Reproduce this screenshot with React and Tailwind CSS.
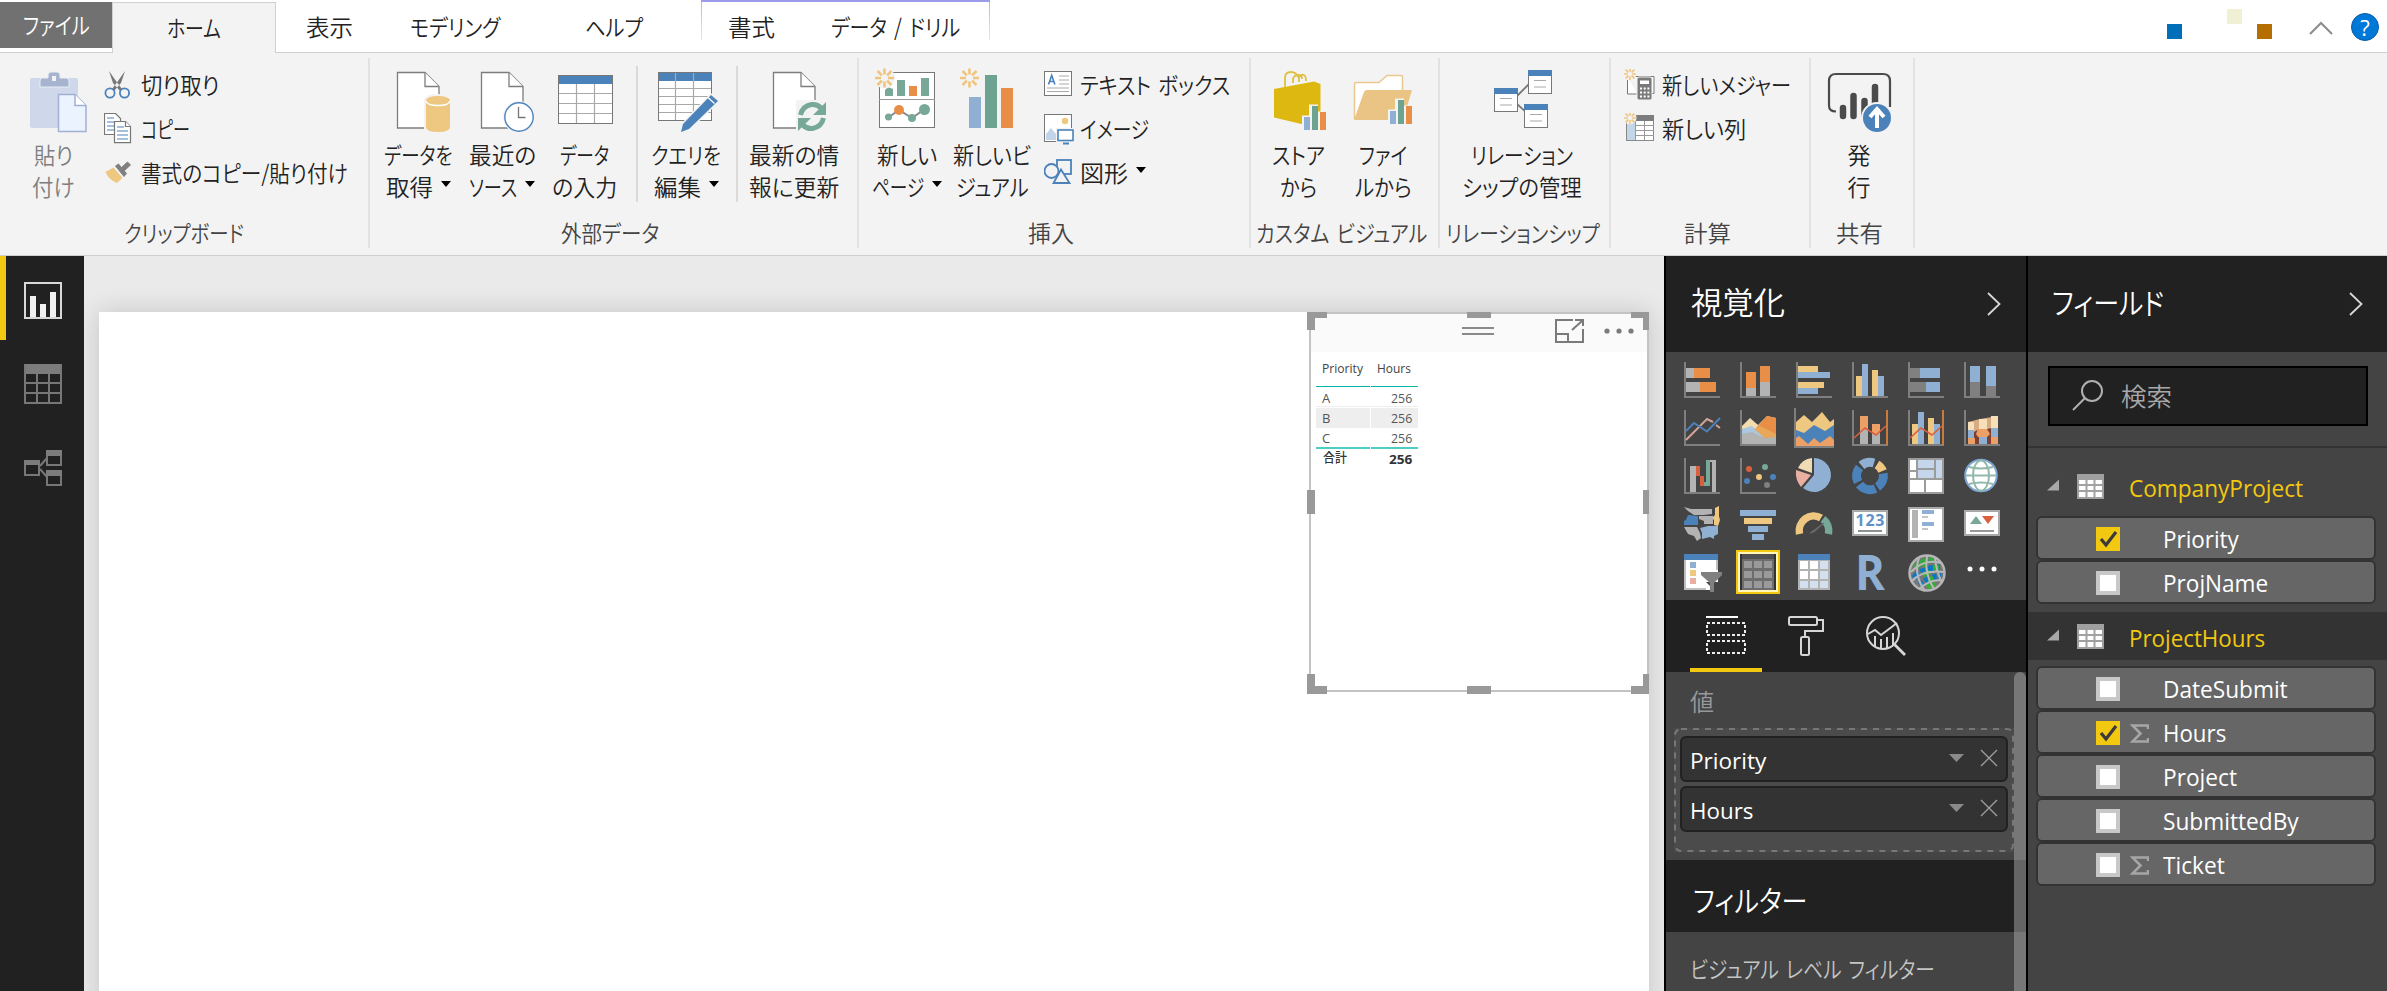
import React, { useLayoutEffect, useRef, useState } from "react";

/* A single line of text, condensed or widened to the width of its box. */
function Fit({ className, latin, children }) {
  const ref = useRef(null);
  const [scale, setScale] = useState(1);
  useLayoutEffect(() => {
    const el = ref.current;
    setScale(el.parentElement.clientWidth / el.offsetWidth);
  }, [children]);
  return (
    <span className={"block shrink-0 " + (latin ? "" : "-mt-[3px] ") + className}>
      <span ref={ref} className="inline-block origin-left whitespace-nowrap" style={{ transform: `scaleX(${scale})` }}>
        {children}
      </span>
    </span>
  );
}

const Caret = () => (
  <svg width="10" height="6" viewBox="0 0 10 6" className="ml-2 -mt-[6px] shrink-0">
    <path d="M0 0H10L5 6Z" fill="#000" />
  </svg>
);

const Star = ({ x, y, s = 1 }) => (
  <g transform={`translate(${x} ${y}) scale(${s})`} stroke="#efc57d" strokeWidth="2.6">
    <circle r="10.5" fill="#f3f3f3" stroke="none" />
    <path d="M0-9.5V-3.5M0 3.5V9.5M-9.5 0H-3.5M3.5 0H9.5M-7-7L-2.6-2.6M2.6 2.6L7 7M-7 7L-2.6 2.6M2.6-2.6L7-7" />
  </g>
);

const Doc = ({ x }) => (
  <g fill="#fff" stroke="#7d7d7d" strokeWidth="1.3">
    <path d={`M${x} 72.5h27.500l14 14v41.500h-41.500z`} />
    <path d={`M${x + 27.5} 72.500v14h14`} />
  </g>
);

/* ---------- ribbon icons ---------- */
const PasteIcon = (
  <g>
    <path d="M32 78h44q2 0 2 2v48H32q-2 0-2-2V80q0-2 2-2z" fill="#cfd8ea" />
    <path d="M42 78h6v-3q0-3 3-3h6q3 0 3 3v3h6q3 0 3 3v6H40v-6q0-3 2-3z" fill="#a6b4d0" stroke="#e8ecf5" />
    <rect x="52" y="76" width="4" height="5" fill="#f3f3f3" />
    <path d="M58.500 94.500h16.500l11 11v26H58.500z" fill="#ebf3ff" stroke="#9fb1d3" strokeWidth="1.500" />
    <path d="M75 94.500v11h11" fill="#fff" stroke="#9fb1d3" strokeWidth="1.500" />
  </g>
);
const GetDataIcon = (
  <g>
    <Doc x={397.5} />
    <path d="M424 101q0-7 14-7t14 7v33h-28z" fill="#f3f3f3" />
    <path d="M426 101v26q0 5 12 5t12-5v-26z" fill="#eec780" />
    <ellipse cx="438" cy="100.500" rx="12" ry="4.500" fill="#eec780" />
    <path d="M426 101q1 4.500 12 4.500t12-4.500" fill="none" stroke="#fff" strokeWidth="1.300" />
  </g>
);
const RecentIcon = (
  <g>
    <Doc x={481.5} />
    <circle cx="519" cy="117" r="16" fill="#f3f3f3" />
    <circle cx="519" cy="117" r="14.200" fill="#fff" stroke="#4e83bd" strokeWidth="1.400" />
    <path d="M518.500 107v10.500h7" fill="none" stroke="#777" strokeWidth="1.300" />
  </g>
);
const TableIcon = (
  <g>
    <rect x="558.500" y="75.500" width="54" height="48" fill="#fff" />
    <rect x="559" y="76" width="53" height="8" fill="#4c82ba" />
    <path d="M558 93.500h54M558 103.500h54M558 113.500h54M576.500 84v39M594.500 84v39" stroke="#a9a9a9" strokeWidth="1.200" />
    <rect x="558.500" y="75.500" width="54" height="48" fill="none" stroke="#777" />
  </g>
);
const QueryIcon = (
  <g>
    <rect x="658.500" y="72.500" width="53" height="48" fill="#fff" />
    <rect x="659" y="73" width="52" height="8" fill="#4c82ba" />
    <path d="M659 88.500h52M659 96.500h52M659 104.500h52M659 112.500h52M675.500 73v48M693.500 73v48" stroke="#a9a9a9" strokeWidth="1.200" />
    <rect x="658.500" y="72.500" width="53" height="48" fill="none" stroke="#777" />
    <path d="M681 132l2-8 28-29 7 6-29 28z" fill="#4c82ba" stroke="#f3f3f3" strokeWidth="3" paintOrder="stroke" />
    <path d="M708 97.500l6.500 6" stroke="#fff" strokeWidth="1.200" />
  </g>
);
const RefreshIcon = (
  <g>
    <Doc x={773.5} />
    <rect x="796" y="100" width="32" height="32" fill="#f3f3f3" />
    <g fill="none" stroke="#78a897" strokeWidth="5">
      <path d="M800.500 115q2-9 11-10.500 6-.500 9.500 3.500" />
      <path d="M823.500 118q-2 9-11 10.500-6 .500-9.500-3.500" />
    </g>
    <path d="M826 102v13h-13zM798 131v-13h13z" fill="#78a897" />
  </g>
);
const NewPageIcon = (
  <g>
    <rect x="879.500" y="72.500" width="55" height="55" fill="#fff" stroke="#777" />
    <path d="M879 99.500h56" stroke="#999" />
    <path d="M885 90l3-3 5 2v7h-8zM897 80h8v16h-8zM921 78h8v18h-8z" fill="#78a897" />
    <rect x="909" y="86" width="8" height="10" fill="#e88e46" />
    <path d="M889 117l10-7 13 8 12-8.500" fill="none" stroke="#8a8a8a" strokeWidth="2" />
    <circle cx="888.500" cy="117" r="3.500" fill="#78a897" />
    <circle cx="899" cy="110" r="5" fill="#e88e46" />
    <circle cx="912" cy="118" r="4" fill="#78a897" />
    <circle cx="924.500" cy="109.500" r="5.500" fill="#78a897" />
    <Star x={884.5} y={78} />
  </g>
);
const NewVisualIcon = (
  <g>
    <rect x="969" y="97" width="12" height="31" fill="#8fafd3" />
    <rect x="985" y="75" width="12" height="53" fill="#6ea392" />
    <rect x="1001" y="88" width="12" height="40" fill="#e88e46" />
    <Star x={969.5} y={78} />
  </g>
);
const StoreIcon = (
  <g>
    <path d="M1285 88v-10q0-6 6-6 5 0 8 6M1293 83v-4q1-4 5-4 4 0 4 4M1299 82v-5q2-3 5-2 2 1 2 6" fill="none" stroke="#dfc041" strokeWidth="1.800" />
    <path d="M1274 89l40-7.500 6.500 2.500v37l-12 4.500-5 -1-29.500-7z" fill="#ddb811" />
    <path d="M1302 115.500h7v-11h9v7h9v20h-25z" fill="#f3f3f3" />
    <rect x="1304" y="117" width="6" height="13" fill="#8fafd3" />
    <rect x="1312" y="106" width="6" height="24" fill="#6ea392" />
    <rect x="1320" y="112" width="6" height="18" fill="#e88e46" />
  </g>
);
const FileIcon = (
  <g>
    <path d="M1354.500 119v-35q0-1.500 1.500-1.500h23l8-7h14q1.500 0 1.500 1.500v14" fill="#fff" stroke="#ebc88f" strokeWidth="1.500" />
    <path d="M1354 120l10-28q1-2 3-2h45l-9 30z" fill="#eac485" />
    <path d="M1388 109.500h7v-11h9v7h9v20h-25z" fill="#f3f3f3" />
    <rect x="1390" y="111" width="6" height="13" fill="#8fafd3" />
    <rect x="1398" y="100" width="6" height="24" fill="#6ea392" />
    <rect x="1406" y="106" width="6" height="18" fill="#e88e46" />
  </g>
);
const Entity = ({ x, y }) => (
  <g>
    <rect x={x + 0.5} y={y + 0.5} width="23" height="23" fill="#fff" stroke="#777" />
    <rect x={x} y={y} width="24" height="6" fill="#4c82ba" />
    <path d={`M${x + 6} ${y + 10.5}h12M${x + 6} ${y + 17}h12`} stroke="#aaa" strokeWidth="1.200" />
  </g>
);
const RelationIcon = (
  <g>
    <path d="M1517 96l12-12M1517 104l10 9" stroke="#777" strokeWidth="1.800" />
    <Entity x={1528} y={70} />
    <Entity x={1494} y={88} />
    <Entity x={1524} y={104} />
  </g>
);
const PublishIcon = (
  <g>
    <path d="M1836 111.500q-7 0-7-6V81q0-7 7-7h47q7 0 7 7v26" fill="none" stroke="#4b4b4b" strokeWidth="2.200" />
    <g stroke="#4b4b4b" strokeWidth="6.500" strokeLinecap="round">
      <path d="M1843 108v8M1853.500 96v20M1864.500 101v15M1875 87v20" />
    </g>
    <circle cx="1877" cy="118" r="16" fill="#f3f3f3" />
    <circle cx="1877" cy="118" r="14" fill="#4c82ba" />
    <path d="M1877 128v-17M1870 117l7-8 7 8" fill="none" stroke="#fff" strokeWidth="4" />
  </g>
);

const CutIcon = (
  <g fill="none">
    <path d="M109 71l4 12 7 8 2-2-6-8zM125 71l-4 12-7 8-2-2 6-8z" fill="#777" />
    <circle cx="110" cy="93" r="4.600" stroke="#4c82ba" strokeWidth="1.800" />
    <circle cx="124.500" cy="93" r="4.600" stroke="#4c82ba" strokeWidth="1.800" />
  </g>
);
const CopyIcon = (
  <g fill="#fff" stroke="#777" strokeWidth="1.200">
    <path d="M104.500 113.500h11l5 5v16h-16z" />
    <path d="M107 118h7M107 122h7M107 126h7M107 130h7" stroke="#4c82ba" />
    <path d="M114.500 121.500h11l5 5v16.200h-16z" />
    <path d="M125.500 121.500v5h5" />
    <path d="M117 127h7M117 131h11M117 135h11M117 139h11" stroke="#4c82ba" />
  </g>
);
const BrushIcon = (
  <g>
    <path d="M105.500 172l8-4.500 9 10.500-5.500 5q-8-3-11.500-11z" fill="#eec780" />
    <path d="M115.500 166l3-2 8 9.500-2.500 3zM121 168l6.500-6 3 3-6.500 6z" fill="#808080" stroke="#808080" />
  </g>
);
const TextBoxIcon = (
  <g>
    <rect x="1044.500" y="71.500" width="27" height="24" fill="#fff" stroke="#777" />
    <path d="M1059 76h10M1059 80h10M1059 84h10M1047 88h22M1047 91.500h22" stroke="#aaa" strokeWidth="1.200" />
    <path d="M1048.500 84.500l3.200-9 3.200 9M1049.500 81.500h4.500" fill="none" stroke="#4c82ba" strokeWidth="1.600" />
  </g>
);
const ImageIcon = (
  <g>
    <rect x="1044.500" y="114.500" width="27" height="27" fill="#fff" stroke="#777" />
    <circle cx="1065" cy="121" r="3.200" fill="#eec780" />
    <path d="M1046 140v-6l5-6 5 6v6z" fill="#c3d4e8" />
    <rect x="1056" y="128" width="19" height="17" fill="#f3f3f3" />
    <rect x="1058" y="130" width="15" height="10.500" fill="#fff" stroke="#4c82ba" strokeWidth="1.600" />
    <path d="M1063 143.500h6" stroke="#4c82ba" strokeWidth="2" />
  </g>
);
const ShapeIcon = (
  <g fill="#f3f3f3" stroke="#4c82ba" strokeWidth="1.800">
    <rect x="1057" y="160" width="14" height="14" />
    <circle cx="1051.500" cy="171" r="7" />
    <path d="M1061 169.500l-7.500 13.500h16z" />
  </g>
);
const MeasureIcon = (
  <g>
    <path d="M1627.500 78v16h10M1634 76.500h20v17h-3" fill="#fff" stroke="#777" />
    <rect x="1637" y="77" width="15" height="23" rx="2" fill="#7a7a7a" stroke="#f3f3f3" />
    <rect x="1640" y="80.500" width="9" height="3.500" fill="#fff" />
    <path d="M1640 88.500h9.500M1640 92.500h9.500M1640 96.500h9.500" stroke="#fff" strokeWidth="1.800" strokeDasharray="2 1.700" />
    <Star x={1630} y={74} s={0.62} />
  </g>
);
const ColumnIcon = (
  <g>
    <rect x="1626.500" y="115.500" width="27" height="25" fill="#fff" stroke="#888" />
    <rect x="1627" y="122" width="8" height="18" fill="#c3d6e8" />
    <rect x="1634" y="115" width="20" height="6" fill="#7d7d7d" />
    <path d="M1635 125.500h19M1635 130.500h19M1635 135.500h19M1635.500 121v19M1644.500 121v19" stroke="#999" />
    <Star x={1630} y={118} s={0.62} />
  </g>
);

/* ---------- ribbon pieces ---------- */
function Big({ className, box, icon, children }) {
  return (
    <div className={"flex shrink-0 flex-col items-center pt-[15px] " + className}>
      <svg className="h-[66px] w-full" viewBox={box}>{icon}</svg>
      <div className="mt-[5px] flex flex-col items-center">{children}</div>
    </div>
  );
}
const Line = ({ children }) => <div className="flex h-8 items-center">{children}</div>;
function Small({ box, w, icon, children }) {
  return (
    <div className="flex h-11 items-center">
      <svg className={"h-8 shrink-0 " + w} viewBox={box}>{icon}</svg>
      {children}
    </div>
  );
}
function Group({ className, label, labelClass, children }) {
  return (
    <div className={"relative flex shrink-0 flex-col " + className}>
      <div className="flex h-[164px]">{children}</div>
      <div className={"flex h-8 items-center text-[#444] " + labelClass}>{label}</div>
      <div className="absolute right-0 top-[5px] h-[190px] w-[2px] bg-[#e2e2e2]" />
    </div>
  );
}

function TabBar() {
  return (
    <div className="flex h-[53px] bg-white text-[#222]">
      <div className="w-[112px] border-b border-[#d0d0d0] pt-[2px]">
        <div className="flex h-[46px] items-center bg-[#717171] pl-[23px] text-white">
          <Fit className="w-[67px]">ファイル</Fit>
        </div>
      </div>
      <div className="mt-[2px] flex w-[164px] items-center justify-center border-x border-t border-[#d0d0d0] bg-[#f3f3f3]">
        <Fit className="w-[54px]">ホーム</Fit>
      </div>
      <div className="flex flex-1 border-b border-[#d0d0d0]">
        <div className="flex items-center pt-[3px]">
          <Fit className="ml-[30px] w-[47px]">表示</Fit>
          <Fit className="ml-[57px] w-[90px]">モデリング</Fit>
          <Fit className="ml-[85px] w-[58px]">ヘルプ</Fit>
        </div>
        <div className="relative ml-[58px] flex w-[289px] items-center border-t-2 border-[#9c9ceb] pl-[27px]">
          <div className="absolute left-0 top-0 h-[38px] w-px bg-linear-to-b from-[#bbb] to-[#e8e8e8]" />
          <div className="absolute right-0 top-0 h-[38px] w-px bg-linear-to-b from-[#bbb] to-[#e8e8e8]" />
          <Fit className="w-[47px]">書式</Fit>
          <Fit className="ml-[56px] w-[129px]">データ / ドリル</Fit>
        </div>
        <div className="flex flex-1 items-start justify-end pr-2">
          <div className="mt-6 h-[15px] w-[15px] bg-[#006fba]" />
          <div className="ml-[45px] mt-[9px] h-[15px] w-[15px] bg-[#f0f0d4]" />
          <div className="ml-[15px] mt-6 h-[15px] w-[15px] bg-[#b56f00]" />
          <svg className="ml-[37px] mt-[21px]" width="24" height="14" viewBox="0 0 24 14">
            <path d="M1 13L12 2L23 13" fill="none" stroke="#8c8c8c" strokeWidth="2" />
          </svg>
          <div className="ml-[18px] mt-[13px] flex h-7 w-7 items-center justify-center rounded-full border border-[#0a5ca8] bg-[#0078d7] font-['Open_Sans',sans-serif] text-[22px] font-normal leading-none text-white">
            ?
          </div>
        </div>
      </div>
    </div>
  );
}

function Ribbon() {
  return (
    <div className="flex h-[203px] border-b border-[#d0d0d0] bg-[#f3f3f3] text-[#222]">
      <Group className="w-[370px]" labelClass="pl-[124px]" label={<Fit className="w-[120px]">クリップボード</Fit>}>
        <Big className="ml-[18px] w-[70px] text-[#7d7d7d]" box="18 68 70 66" icon={PasteIcon}>
          <Line><Fit className="w-[39px]">貼り</Fit></Line>
          <Line><Fit className="w-[42px]">付け</Fit></Line>
        </Big>
        <div className="ml-4 mt-[10px]">
          <Small box="104 69 28 32" w="w-[28px]" icon={CutIcon}><Fit className="ml-[9px] w-[78px]">切り取り</Fit></Small>
          <Small box="104 113 28 32" w="w-[28px]" icon={CopyIcon}><Fit className="ml-[9px] w-[49px]">コピー</Fit></Small>
          <Small box="104 157 28 32" w="w-[28px]" icon={BrushIcon}><Fit className="ml-[9px] w-[207px]">書式のコピー/貼り付け</Fit></Small>
        </div>
      </Group>
      <Group className="w-[489px]" labelClass="pl-[191px]" label={<Fit className="w-[98px]">外部データ</Fit>}>
        <Big className="ml-2 w-[80px]" box="378 68 80 66" icon={GetDataIcon}>
          <Line><Fit className="w-[69px]">データを</Fit></Line>
          <Line><Fit className="w-[47px]">取得</Fit><Caret /></Line>
        </Big>
        <Big className="ml-1 w-[80px]" box="462 68 80 66" icon={RecentIcon}>
          <Line><Fit className="w-[67px]">最近の</Fit></Line>
          <Line><Fit className="w-[48px]">ソース</Fit><Caret /></Line>
        </Big>
        <Big className="ml-1 w-[76px]" box="546 68 76 66" icon={TableIcon}>
          <Line><Fit className="w-[49px]">データ</Fit></Line>
          <Line><Fit className="w-[65px]">の入力</Fit></Line>
        </Big>
        <div className="ml-[14px] mt-[13px] h-[136px] w-[2px] bg-[#dadada]" />
        <Big className="ml-2 w-[80px]" box="646 68 80 66" icon={QueryIcon}>
          <Line><Fit className="w-[70px]">クエリを</Fit></Line>
          <Line><Fit className="w-[47px]">編集</Fit><Caret /></Line>
        </Big>
        <div className="ml-[10px] mt-[13px] h-[136px] w-[2px] bg-[#dadada]" />
        <Big className="ml-[7px] w-[97px]" box="745 68 97 66" icon={RefreshIcon}>
          <Line><Fit className="w-[90px]">最新の情</Fit></Line>
          <Line><Fit className="w-[90px]">報に更新</Fit></Line>
        </Big>
      </Group>
      <Group className="w-[392px]" labelClass="pl-[169px]" label={<Fit className="w-[46px]">挿入</Fit>}>
        <Big className="ml-2 w-[80px]" box="867 68 80 66" icon={NewPageIcon}>
          <Line><Fit className="w-[60px]">新しい</Fit></Line>
          <Line><Fit className="w-[52px]">ページ</Fit><Caret /></Line>
        </Big>
        <Big className="ml-[5px] w-[80px]" box="952 68 80 66" icon={NewVisualIcon}>
          <Line><Fit className="w-[78px]">新しいビ</Fit></Line>
          <Line><Fit className="w-[73px]">ジュアル</Fit></Line>
        </Big>
        <div className="ml-3 mt-[10px]">
          <Small box="1044 69 30 32" w="w-[30px]" icon={TextBoxIcon}><Fit className="ml-[6px] w-[150px]">テキスト ボックス</Fit></Small>
          <Small box="1044 113 30 32" w="w-[30px]" icon={ImageIcon}><Fit className="ml-[6px] w-[69px]">イメージ</Fit></Small>
          <Small box="1044 157 30 32" w="w-[30px]" icon={ShapeIcon}><Fit className="ml-[6px] w-[48px]">図形</Fit><Caret /></Small>
        </div>
      </Group>
      <Group className="w-[189px]" labelClass="pl-[5px]" label={<Fit className="w-[171px]">カスタム ビジュアル</Fit>}>
        <Big className="ml-3 w-[70px]" box="1263 68 70 66" icon={StoreIcon}>
          <Line><Fit className="w-[53px]">ストア</Fit></Line>
          <Line><Fit className="w-[37px]">から</Fit></Line>
        </Big>
        <Big className="ml-[15px] w-[70px]" box="1348 68 70 66" icon={FileIcon}>
          <Line><Fit className="w-[48px]">ファイ</Fit></Line>
          <Line><Fit className="w-[57px]">ルから</Fit></Line>
        </Big>
      </Group>
      <Group className="w-[171px]" labelClass="pl-[6px]" label={<Fit className="w-[154px]">リレーションシップ</Fit>}>
        <Big className="ml-[17px] w-[130px]" box="1457 68 130 66" icon={RelationIcon}>
          <Line><Fit className="w-[102px]">リレーション</Fit></Line>
          <Line><Fit className="w-[120px]">シップの管理</Fit></Line>
        </Big>
      </Group>
      <Group className="w-[200px]" labelClass="pl-[73px]" label={<Fit className="w-[47px]">計算</Fit>}>
        <div className="ml-[13px] mt-[10px]">
          <Small box="1624 69 32 32" w="w-[32px]" icon={MeasureIcon}><Fit className="ml-[6px] w-[129px]">新しいメジャー</Fit></Small>
          <Small box="1624 113 32 32" w="w-[32px]" icon={ColumnIcon}><Fit className="ml-[6px] w-[84px]">新しい列</Fit></Small>
        </div>
      </Group>
      <Group className="w-[104px]" labelClass="pl-[25px]" label={<Fit className="w-[47px]">共有</Fit>}>
        <Big className="ml-2 w-[80px]" box="1819 68 80 66" icon={PublishIcon}>
          <Line><Fit className="w-[23px]">発</Fit></Line>
          <Line><Fit className="w-[23px]">行</Fit></Line>
        </Big>
      </Group>
    </div>
  );
}

function NavRail() {
  return (
    <div className="flex w-[84px] shrink-0 flex-col bg-[#212121]">
      <div className="flex h-[84px] items-center border-l-[6px] border-[#f2c811] pl-[18px] pt-[3px]">
        <svg width="38" height="38" viewBox="0 0 38 38">
          <rect x="1" y="2" width="36" height="35" fill="none" stroke="#d8d8d8" strokeWidth="2" />
          <path d="M6 15h6v21H6zM16 23h6v13h-6zM26 11h6v25h-6z" fill="#f0f0f0" />
        </svg>
      </div>
      <div className="flex h-[84px] items-center pl-6 pt-[4px]">
        <svg width="38" height="40" viewBox="0 0 38 40">
          <rect width="38" height="10" fill="#7c7c7c" />
          <path d="M1 1V39H37V1M1 19H37M1 29H37M13 10V39M25 10V39" fill="none" stroke="#777" strokeWidth="2" />
        </svg>
      </div>
      <div className="flex h-[84px] items-center pl-6 pt-[4px]">
        <svg width="38" height="38" viewBox="0 0 38 38">
          <g fill="none" stroke="#777" strokeWidth="2">
            <path d="M1 12H15V26H1zM23 2H37V16H23zM23 22H37V36H23zM16 17L23 9M16 20L23 28" />
          </g>
          <path d="M0 11H16V16H0zM22 1H38V7H22zM22 21H38V27H22z" fill="#7c7c7c" />
        </svg>
      </div>
    </div>
  );
}

const rows = [["A", "256"], ["B", "256"], ["C", "256"]];

function TableVisual() {
  return (
    <div className="relative ml-auto h-[380px] w-[340px] border-2 border-[#c3c3c3] bg-white">
      <div className="relative flex h-[38px] items-start justify-end bg-[#fafafa]">
        <div className="mt-[13px] mr-[61px] h-2 w-8 border-y-2 border-[#8a8a8a]" />
        <svg className="mt-[5px] mr-[20px]" width="29" height="24" viewBox="0 0 29 24">
          <path d="M18 1H1V23H28V10M1 15H13V23" fill="none" stroke="#7a7a7a" strokeWidth="2" />
          <path d="M17 11L27 2M20 1H28V7" fill="none" stroke="#7a7a7a" strokeWidth="2" />
        </svg>
        <svg className="mt-[14px] mr-[13px]" width="30" height="6" viewBox="0 0 30 6">
          <g fill="#7a7a7a"><circle cx="3" cy="3" r="2.600" /><circle cx="15" cy="3" r="2.600" /><circle cx="27" cy="3" r="2.600" /></g>
        </svg>
      </div>
      <div className="ml-[5px] grid w-[102px] grid-cols-[54px_47px] gap-x-px font-['Open_Sans','Noto_Sans_CJK_JP',sans-serif] text-[13px] font-normal text-[#444]">
        <div className="flex h-[35px] items-center border-b border-[#01b8aa] pl-[6px]"><Fit className="w-[41px]">Priority</Fit></div>
        <div className="flex h-[35px] items-center border-b border-[#01b8aa] pl-[6px]"><Fit className="w-[34px]">Hours</Fit></div>
        {rows.map(([k, v], i) => (
          <React.Fragment key={k}>
            <div className={"flex items-center pl-[6px] leading-none text-[#555] " + (i === 0 ? "h-5 border-b border-[#eee] mb-px pt-1" : i === 1 ? "h-5 bg-[#eee] pt-px" : "h-[21px] border-b-2 border-[#4dcdc4] pt-[2px]")}>{k}</div>
            <div className={"flex items-center justify-end pr-[6px] leading-none text-[#555] " + (i === 0 ? "h-5 border-b border-[#eee] mb-px pt-1" : i === 1 ? "h-5 bg-[#eee] pt-px" : "h-[21px] border-b-2 border-[#4dcdc4] pt-[2px]")}><Fit latin className="w-[21px]">{v}</Fit></div>
          </React.Fragment>
        ))}
        <div className="flex h-5 items-center pl-[7px] font-bold leading-none text-[#333]"><Fit className="w-[24px] font-medium">合計</Fit></div>
        <div className="flex h-5 items-center justify-end pr-[6px] font-bold leading-none text-[#333]"><Fit latin className="w-[23px]">256</Fit></div>
      </div>
      <svg className="pointer-events-none absolute -left-1 -top-[2px]" width="342" height="382" viewBox="0 0 342 382">
        <path
          fill="#999"
          d="M0 0H20V6H8V18H0ZM160 0H184V6H160ZM324 0H342V18H336V6H324ZM0 178H8V202H0ZM336 178H342V202H336ZM0 362H8V374H20V382H0ZM160 374H184V382H160ZM324 374H336V362H342V382H324Z"
        />
      </svg>
    </div>
  );
}

/* ---------- visualization gallery icons, 36 x 36 ---------- */
const O = "#e88e46", B = "#8fafd3", Y = "#eec780", G = "#b3b3b3", D = "#808080", BL = "#4c82ba", T = "#78a897", R = "#d9603f", P = "#e9b0a2";
const Axis = () => <path d="M1 0V35H36" fill="none" stroke="#7f7f7f" strokeWidth="2" />;
const gallery = [
  <g><Axis /><path d="M2 6h8v10H2zM2 20h14v10H2z" fill={G} /><path d="M10 6h16v10H10zM16 20h16v10H16z" fill={O} /></g>,
  <g><Axis /><path d="M6 26h10v8H6zM20 20h10v14H20z" fill={G} /><path d="M6 10h10v16H6zM20 4h10v16H20z" fill={O} /></g>,
  <g><Axis /><path d="M2 4h20v6H2zM2 20h26v6H2z" fill={Y} /><path d="M2 10h32v6H2zM2 26h20v6H2z" fill={B} /></g>,
  <g><Axis /><path d="M4 14h6v20H4zM20 8h6v26h-6z" fill={Y} /><path d="M10 2h6v32h-6zM26 14h6v20h-6z" fill={B} /></g>,
  <g><Axis /><path d="M2 6h10v10H2zM2 20h16v10H2z" fill={D} /><path d="M12 6h20v10H12zM18 20h14v10H18z" fill={B} /></g>,
  <g><Axis /><path d="M6 20h10v14H6zM22 24h10v10H22z" fill={D} /><path d="M6 4h10v16H6zM22 4h10v20H22z" fill={B} /></g>,
  <g fill="none" strokeWidth="2"><Axis /><path d="M2 30L23 9L29 12M32 15L36 18" stroke="#d3a296" /><path d="M2 21L10 13L23 21.500L36 8" stroke={BL} /></g>,
  <g><Axis /><path d="M2 16L10 8L18 15L27 6L36 8V34H2Z" fill="#f3dcae" /><path d="M16 18L27 6L36 8V34H26Z" fill={O} /><path d="M2 19L12 16L25 28V34H2Z" fill="#a9c8e2" /><path d="M2 24L12 22L25 28L36 26V34H2Z" fill={G} /><path d="M14 19L20 16L36 24V27L25 28Z" fill="#e9a75a" /></g>,
  <g><path d="M-1-2V37H38" fill="none" stroke="#7f7f7f" strokeWidth="2" /><path d="M0 12L8 5L16 12L26 2L34 12L38 9V36H0Z" fill={Y} /><path d="M0 20L8 23L18 15L29 21L38 15V36H0Z" fill={BL} /><path d="M0 28L3 26L12 34L18 28L24 33L34 26L38 30V36H0Z" fill="#eda065" /></g>,
  <g><Axis /><path d="M8 6h8v28H8zM20 14h8v20h-8z" fill="#eda065" /><path d="M8 20h8v14H8zM20 24h8v10h-8z" fill={G} /><path d="M35 0V35" stroke="#c87b3b" strokeWidth="2" /><path d="M2 28L13 18L24 25L34 16" fill="none" stroke={R} strokeWidth="1.600" /></g>,
  <g><Axis /><path d="M4 14h6v20H4zM20 8h6v26h-6z" fill={Y} /><path d="M10 2h6v32h-6zM26 14h6v20h-6z" fill={B} /><path d="M35 0V35" stroke="#c87b3b" strokeWidth="2" /><path d="M2 28L13 18L24 25L34 16" fill="none" stroke={R} strokeWidth="1.600" /></g>,
  <g><Axis /><path d="M4 12L16 9L34 6V34H4Z" fill="#d7ae84" /><path d="M4 12h6v8H4zM15 9h8v10h-8zM27 6h7v12h-7z" fill="#f7dfb8" /><path d="M10 22L15 19H23L28 18V34H10Z" fill="#7c4033" /><path d="M4 20h6v8H4zM15 26h8v8h-8zM27 18h7v9h-7z" fill={B} /><path d="M4 28h7v6H4zM14 19l9 0 3 5-3 3h-9l-2-3zM27 27h7v7h-7z" fill="#eda065" /></g>,
  <g><Axis /><path d="M6 8h6v26H6zM28 2h4v32h-4zM22 2h10v2H22z" fill={G} /><path d="M12 8h4v10h-4zM16 18h4v10h-4z" fill={R} /><path d="M22 2h4v26h-6v-4h2z" fill={T} /></g>,
  <g><Axis /><circle cx="9" cy="11" r="3" fill={R} /><circle cx="25" cy="9" r="3" fill={T} /><circle cx="19" cy="19" r="3" fill={Y} /><circle cx="33" cy="19" r="3" fill={BL} /><circle cx="7" cy="23" r="3" fill={BL} /><circle cx="27" cy="27" r="3" fill={D} /></g>,
  <g><path d="M18 0A17 17 0 1 1 7 30L18 17Z" fill={B} /><path d="M16 0V15L2 10Q6 1 16 0Z" fill="#f0dcb4" /><path d="M0 12L15 17L5 29Q-1 22 0 12Z" fill={P} /></g>,
  <g fill="none" strokeWidth="9"><path d="M9.500 7.500A13.500 13.500 0 0 1 22 5" stroke={B} /><path d="M25 6.500A13.500 13.500 0 0 1 30.500 13" stroke={Y} /><path d="M31.200 15.500A13.500 13.500 0 0 1 25.500 29" stroke={BL} /><path d="M23.500 30.500A13.500 13.500 0 0 1 7.500 26.500" stroke={BL} /><path d="M6 24A13.500 13.500 0 0 1 7.500 9.500" stroke={BL} /></g>,
  <g><rect x="0" y="0" width="36" height="36" fill="#9b9b9b" /><path d="M2 2h6v10H2zM2 14h6v6H2zM2 22h14v12H2zM18 22h16v12H18z" fill="#fff" /><path d="M10 2h16v8H10zM10 12h16v8H10zM28 2h6v18h-6z" fill="#c5d6ea" /></g>,
  <g fill="none"><circle cx="17" cy="17.500" r="15.800" fill="#fff" stroke="#7ea6d2" strokeWidth="2" /><g stroke="#91b8aa" strokeWidth="2"><path d="M2 17.500H32M5 9Q17 12 29 9M5 26Q17 23 29 26" /><ellipse cx="17" cy="17.500" rx="8" ry="15" /></g></g>,
  <g><path d="M0 1L7 3H28V8L20 9H10L4 5Z" fill={G} /><path d="M31 2L35 0V10L36 14L34 20L30 19V14L28 12L31 9Z" fill={Y} /><path d="M4 9L14 10V19H0V15L2 14Z" fill={BL} /><path d="M15 10H29V18H20V15L15 13Z" fill={G} /><path d="M0 21H13L16 27L17 32L13 35L10 30L4 28Z" fill={G} /><path d="M16 22L24 20H34V28L30 30V33L26 31L18 33V27Z" fill={B} /></g>,
  <g><path d="M0 4h36v6H0zM8 20h20v6H8zM12 28h12v6H12z" fill={B} /><path d="M4 12h28v6H4z" fill={Y} /></g>,
  <g fill="none"><path d="M3.500 28A14.500 15 0 0 1 25 12" stroke={Y} strokeWidth="7.500" /><path d="M27 13A14 15 0 0 1 32.500 28" stroke={T} strokeWidth="7.500" /><path d="M14 27L28 17L18 26Z" fill="#6a6a6a" stroke="#6a6a6a" /></g>,
  <g><rect x="1" y="5" width="34" height="24" fill="#fff" stroke="#a9a9a9" strokeWidth="2" /><text x="18" y="20" textAnchor="middle" textLength="29" fontFamily="Open Sans" fontWeight="700" fontSize="16" fill="#6092c8">123</text><path d="M6 25H30" stroke="#8b938f" strokeWidth="2" /></g>,
  <g><rect x="1" y="2" width="34" height="33" fill="#fff" stroke="#a9a9a9" strokeWidth="2" /><path d="M4 4h6v28H4z" fill={G} /><path d="M14 4h12v4H14zM14 16h12v4H14z" fill={B} /><path d="M14 10h6v2h-6zM14 22h6v2h-6z" fill="#c5c5c5" /></g>,
  <g><rect x="1" y="5" width="34" height="24" fill="#fff" stroke="#a9a9a9" strokeWidth="2" /><path d="M6 18L12 10L18 18Z" fill={T} /><path d="M18 10H30L24 18Z" fill={R} /><path d="M6 25H30" stroke="#999" strokeWidth="2" /></g>,
  <g><rect x="0" y="0" width="34" height="36" fill="#fff" /><path d="M0 0h34v6H0z" fill={BL} /><path d="M1 6V35H22M33 6V16" fill="none" stroke="#a9a9a9" strokeWidth="1.500" /><path d="M6 8h6v6H6z" fill={B} /><path d="M6 16h6v6H6z" fill={Y} /><path d="M6 24h6v6H6z" fill={P} /><path d="M22 28L30 36H34V28Z" fill="#444" /><path d="M17 18H38V21L30 29V38H26V29L17 21Z" fill="#808080" /></g>,
  null,
  <g><rect x="2" y="0" width="32" height="36" fill="#b3b3b3" /><path d="M2 0h32v6H2z" fill={BL} /><path d="M4 7h8v8H4zM14 7h8v8h-8zM4 17h8v8H4zM14 17h8v8h-8z" fill="#fff" /><path d="M24 7h8v8h-8zM24 17h8v8h-8zM4 27h8v7H4zM14 27h8v7h-8zM24 27h8v7h-8z" fill="#d3e0ef" /></g>,
  <text x="3" y="36" fontFamily="Open Sans" fontWeight="700" fontSize="49" textLength="30" lengthAdjust="spacingAndGlyphs" fill={B}>R</text>,
  <g fill="none"><circle cx="19" cy="19" r="18" fill="#777" /><g strokeWidth="6"><path d="M7 14Q14 6 25 6" stroke="#35a844" strokeDasharray="5 2 7 2" /><path d="M6 24Q14 14 32 13" stroke="#0a78c8" strokeDasharray="7 2 5 2" /><path d="M12 31Q22 22 33 22" stroke="#0a78c8" strokeDasharray="4 2 7 2" /></g><path d="M15 21l7-3M25 14l6-1M14 12l5-4M19 33l8-3M20 26l5-2" stroke="#35b035" strokeWidth="5" /><circle cx="19" cy="19" r="17.500" stroke="#b5b5b5" strokeWidth="2.500" /><g stroke="#b9b9b9" strokeWidth="2"><path d="M3 18Q16 4 33 9M3 28Q14 15 36 18M11 35Q24 24 35 27M11 4Q5 20 17 37M19 2Q16 20 26 35M27 4Q28 16 34 29" /></g></g>,
  <g fill="#fff"><circle cx="6" cy="15" r="2.500" /><circle cx="18" cy="15" r="2.500" /><circle cx="30" cy="15" r="2.500" /></g>,
];

function Gallery() {
  return (
    <div className="grid h-[248px] grid-cols-[repeat(6,56px)] grid-rows-[repeat(5,48px)] bg-[#444] pl-[18px] pt-[10px]">
      {gallery.map((icon, i) =>
        icon ? (
          <svg key={i} className="overflow-visible" width="36" height="36" viewBox="0 0 36 36">{icon}</svg>
        ) : (
          <div key={i} className="-ml-1 -mt-1 h-11 w-11 border-2 border-[#f2c811] bg-[#fff6b8] p-[2px]">
            <svg width="36" height="36" viewBox="0 0 36 36">
              <rect width="36" height="36" fill="#333" />
              <rect x="2" y="1" width="32" height="35" fill="#6d6d6d" />
              <path d="M2 0h32v5H2z" fill="#505050" />
              <path d="M4 7h8v7H4zM14 7h8v7h-8zM24 7h8v7h-8zM4 17h8v7H4zM14 17h8v7h-8zM24 17h8v7h-8zM4 27h8v7H4zM14 27h8v7h-8zM24 27h8v7h-8z" fill="#9a9a9a" />
            </svg>
          </div>
        )
      )}
    </div>
  );
}

const Chevron = ({ className }) => (
  <svg className={className} width="14" height="24" viewBox="0 0 14 24">
    <path d="M1 1L12.500 12L1 23" fill="none" stroke="#d8d8d8" strokeWidth="1.800" />
  </svg>
);

function Pill({ children }) {
  return (
    <div className="flex h-[46px] items-center rounded-md border-2 border-[#212121] bg-[#333] pl-2 pr-2 font-['Open_Sans',sans-serif] text-[22px] font-normal text-white">
      <div className="pt-[2px]">{children}</div>
      <svg className="ml-auto -mt-[2px]" width="50" height="20" viewBox="0 0 50 20">
        <path d="M1 6H16L8.500 14Z" fill="#8a8a8a" />
        <path d="M33 2L49 18M49 2L33 18" stroke="#a0a0a0" strokeWidth="1.300" />
      </svg>
    </div>
  );
}

function VizPane() {
  return (
    <div className="flex w-[364px] shrink-0 flex-col border-x-2 border-black bg-[#444]">
      <div className="flex h-24 shrink-0 items-center bg-[#212121] pb-[4px] pl-[25px] text-white">
        <Fit className="w-[94px] text-[31px]">視覚化</Fit>
        <Chevron className="ml-auto mr-[25px] mt-1" />
      </div>
      <Gallery />
      <div className="flex h-[72px] shrink-0 bg-[#212121] pl-6">
        <div className="flex w-[72px] border-b-4 border-[#f2c811] pl-4 pt-4">
          <svg width="40" height="40" viewBox="0 0 40 40">
            <path d="M0 1H32" stroke="#fff" strokeWidth="2" />
            <path d="M1 7H39V19H1zM1 25H39V37H1z" fill="none" stroke="#eee" strokeWidth="2" strokeDasharray="3 2" />
          </svg>
        </div>
        <svg className="ml-[26px] mt-4" width="38" height="40" viewBox="0 0 38 40">
          <g fill="none" stroke="#d6d6d6" strokeWidth="2">
            <rect x="1" y="1" width="28" height="8" rx="1.500" />
            <path d="M29 4H35V15H17V21" />
            <rect x="13" y="21" width="8" height="18" rx="1.500" />
          </g>
        </svg>
        <svg className="ml-[40px] mt-4" width="40" height="40" viewBox="0 0 40 40">
          <g fill="none" stroke="#d6d6d6" strokeWidth="2">
            <circle cx="17" cy="17" r="16" />
            <path d="M28 28L39 39" strokeWidth="2.800" />
            <path d="M2 18L9 14L15 19L31 7M9 20V30M15 23V32M21 21V32M27 17V29" />
          </g>
        </svg>
      </div>
      <div className="relative flex flex-1 flex-col">
        <div className="flex h-[56px] shrink-0 items-center pl-6 pt-1 text-[#999]"><Fit className="w-[24px] text-[24px]">値</Fit></div>
        <div className="relative mx-2 h-[124px] w-[340px] shrink-0 bg-[#4b4b4b] px-[6px] pt-2">
          <svg className="absolute left-0 top-0" width="340" height="124" viewBox="0 0 340 124">
            <rect x="1" y="1" width="338" height="122" rx="6" fill="none" stroke="#777" strokeWidth="2" strokeDasharray="6 6" />
          </svg>
          <div className="relative flex flex-col gap-1">
            <Pill><Fit latin className="w-[76px]">Priority</Fit></Pill>
            <Pill><Fit latin className="w-[63px]">Hours</Fit></Pill>
          </div>
        </div>
        <div className="mt-2 flex h-[72px] shrink-0 items-center bg-[#212121] pb-0 pl-[27px] pt-2 text-white">
          <Fit className="w-[114px] text-[30px]">フィルター</Fit>
        </div>
        <div className="flex flex-1 items-center pl-6 pt-[15px] text-[#c4c4c4]"><Fit className="w-[245px]">ビジュアル レベル フィルター</Fit></div>
        <div className="absolute right-0 top-0 h-full w-3 rounded-t-md bg-[#aaaaaa]/50" />
      </div>
    </div>
  );
}

function TableHead({ className, children }) {
  return (
    <div className={"flex h-12 shrink-0 items-center pl-[19px] font-['Open_Sans',sans-serif] text-[23px] font-normal text-[#f2c811] " + className}>
      <svg className="-mt-[2px] shrink-0" width="12" height="12" viewBox="0 0 13 12"><path d="M13 0V12H0Z" fill="#a8a8a8" /></svg>
      <svg className="ml-[18px] mr-[25px] shrink-0" width="27" height="25" viewBox="0 0 27 25">
        <rect width="27" height="25" fill="#a0a0a0" />
        <path d="M2 6h6.500v4H2zM10.500 6h6v4h-6zM18.500 6h6.500v4h-6.500zM2 12h6.500v4H2zM10.500 12h6v4h-6zM18.500 12h6.500v4h-6.500zM2 18h6.500v5H2zM10.500 18h6v5h-6zM18.500 18h6.500v5h-6.500z" fill="#fff" />
      </svg>
      <div className="pt-[3px]">{children}</div>
    </div>
  );
}

function Field({ checked, sum, children }) {
  return (
    <div className="flex h-11 shrink-0 items-center rounded-md border-2 border-[#333] bg-[#666] pl-[58px] pt-[2px] font-['Open_Sans',sans-serif] text-[23px] font-normal text-white">
      {checked ? (
        <svg width="24" height="24" viewBox="0 0 24 24">
          <rect width="24" height="24" fill="#f2c811" />
          <path d="M5 12L10 18L20 5" fill="none" stroke="#3a3a3a" strokeWidth="3.200" />
        </svg>
      ) : (
        <div className="h-6 w-6 border-4 border-[#c8c8c8] bg-white" />
      )}
      <div className="flex w-[43px] pl-[10px]">
        {sum && (
          <svg width="19" height="19" viewBox="0 0 19 19">
            <path d="M18 5V1.500H2.500L10.500 9.500L2.500 17.500H18V14" fill="none" stroke="#a6a6a6" strokeWidth="2.600" />
          </svg>
        )}
      </div>
      {children}
    </div>
  );
}

function FieldsPane() {
  return (
    <div className="flex w-[359px] shrink-0 flex-col bg-[#444]">
      <div className="flex h-24 shrink-0 items-center bg-[#212121] pb-[4px] pl-[24px] text-white">
        <Fit className="w-[112px] text-[30px]">フィールド</Fit>
        <Chevron className="ml-auto mr-[24px] mt-1" />
      </div>
      <div className="flex h-24 shrink-0 items-start border-b-2 border-[#333] pl-5 pt-[14px]">
        <div className="flex h-[60px] w-[320px] items-center border-2 border-black bg-[#212121] pl-[22px] text-[#a8a8a8]">
          <svg width="32" height="32" viewBox="0 0 32 32">
            <circle cx="20" cy="11" r="10" fill="none" stroke="#b0b0b0" strokeWidth="2" />
            <path d="M13 18L1 30" stroke="#b0b0b0" strokeWidth="2" />
          </svg>
          <Fit className="ml-[17px] w-[51px] text-[25px]">検索</Fit>
        </div>
      </div>
      <TableHead className="mt-[14px]"><Fit latin className="w-[174px]">CompanyProject</Fit></TableHead>
      <div className="ml-2 mt-[6px] flex w-[340px] flex-col">
        <Field checked><Fit latin className="w-[76px]">Priority</Fit></Field>
        <Field><Fit latin className="w-[105px]">ProjName</Fit></Field>
      </div>
      <TableHead className="mt-2 bg-[#333]"><Fit latin className="w-[136px]">ProjectHours</Fit></TableHead>
      <div className="ml-2 mt-[6px] flex w-[340px] flex-col">
        <Field><Fit latin className="w-[125px]">DateSubmit</Fit></Field>
        <Field checked sum><Fit latin className="w-[63px]">Hours</Fit></Field>
        <Field><Fit latin className="w-[74px]">Project</Fit></Field>
        <Field><Fit latin className="w-[136px]">SubmittedBy</Fit></Field>
        <Field sum><Fit latin className="w-[62px]">Ticket</Fit></Field>
      </div>
    </div>
  );
}

export default function App() {
  return (
    <div className="flex h-[991px] w-[2387px] flex-col overflow-hidden font-['Noto_Sans_CJK_JP',sans-serif] text-[23px] font-[350] leading-8 [font-feature-settings:'palt'] [word-spacing:3px]">
      <TabBar />
      <Ribbon />
      <div className="flex min-h-0 flex-1">
        <NavRail />
        <div className="flex min-w-0 flex-1 overflow-hidden bg-[#eaeaea] pl-[15px] pr-[15px] pt-14">
          <div className="h-[720px] flex-1 bg-white shadow-[0_0_24px_rgba(0,0,0,0.16)]">
            <TableVisual />
          </div>
        </div>
        <VizPane />
        <FieldsPane />
      </div>
    </div>
  );
}
